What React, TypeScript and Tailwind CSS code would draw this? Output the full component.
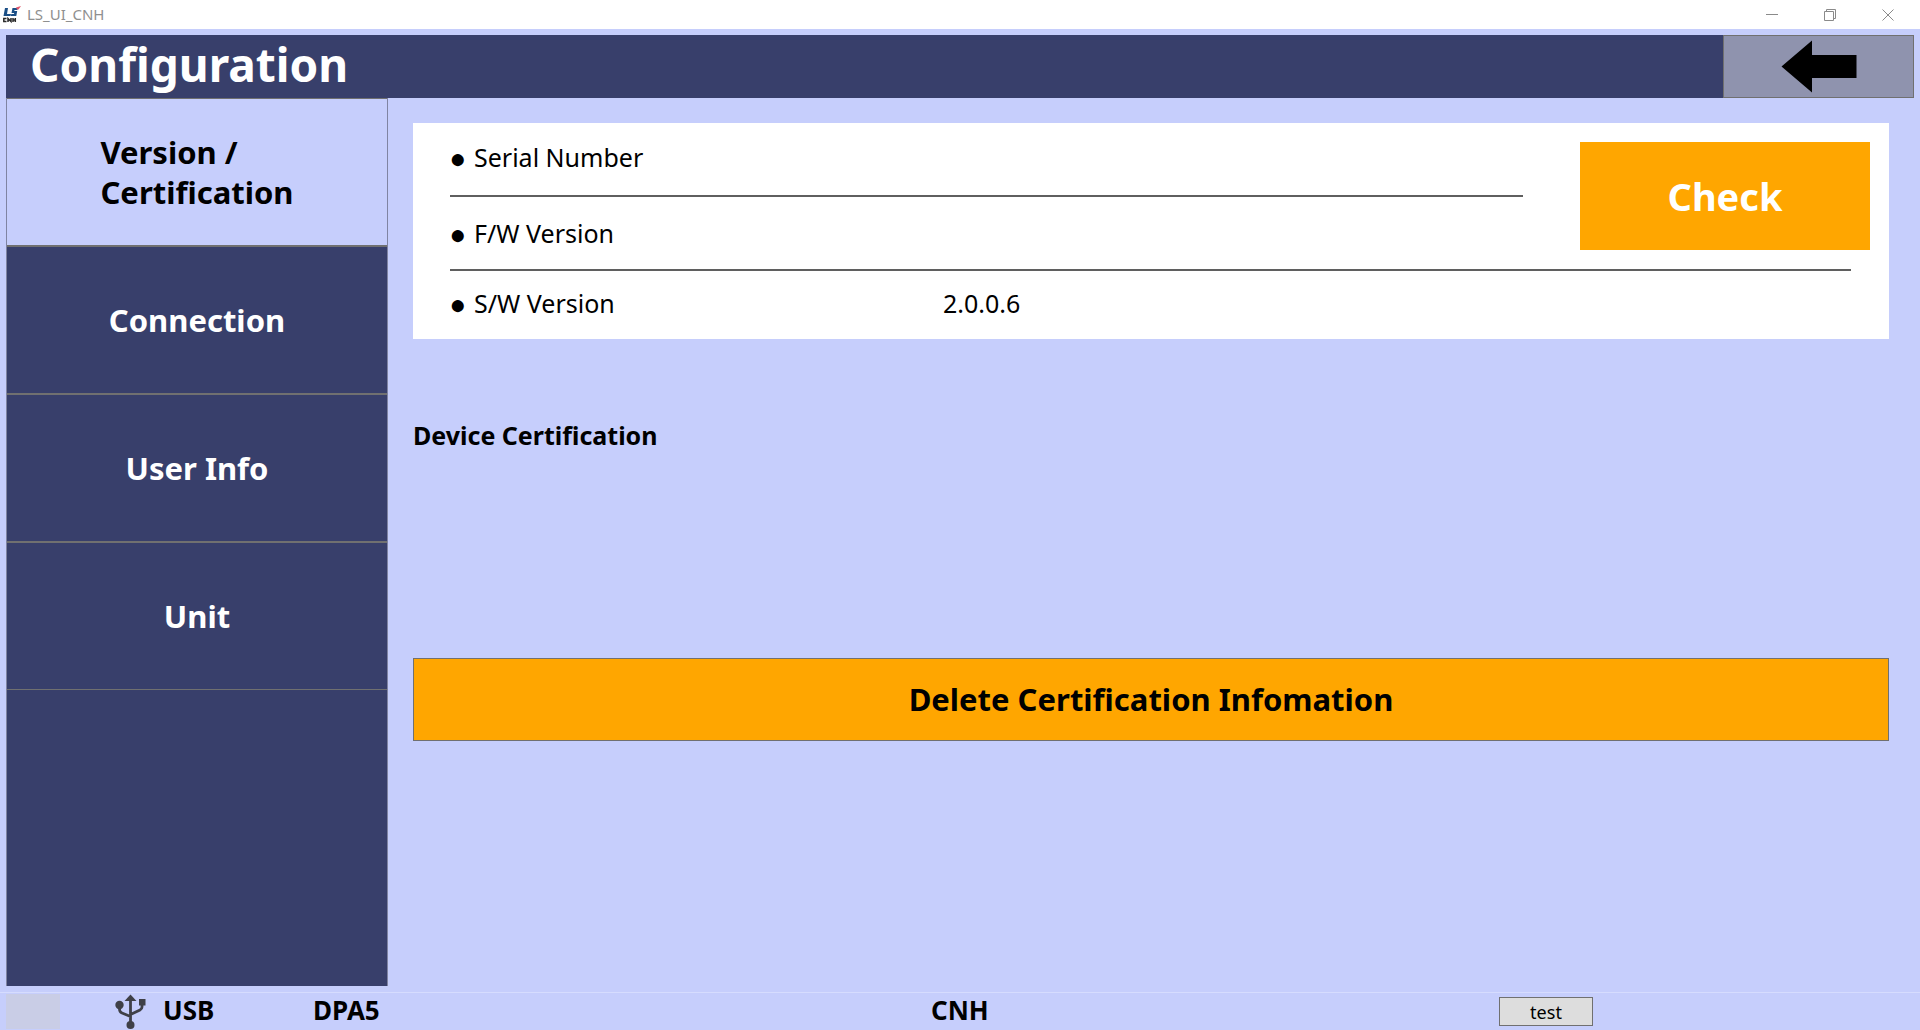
import React from "react";

const NAV = ["Connection", "User Info", "Unit"];

function TitleBar() {
  return (
    <div className="flex h-[29px] shrink-0 items-center justify-between bg-white pl-[2px] pr-[3px]">
      <div className="flex items-center gap-1.5">
        <svg width="19" height="20" viewBox="0 0 19 20" aria-hidden="true">
          <path d="M3 3H6L5 9H9L8.500 11H1.500Z" fill="#1b4f86" />
          <path d="M10.500 3H16L15.300 5H12.500L12.300 6H15.200L14.300 11H8.800L9.300 9H12L12.200 8H9.500Z" fill="#1b4f86" />
          <path d="M14 2.500L19 1L16.500 4.500L15 4.500Z" fill="#e0566b" />
          <path
            d="M4.500 13.500H1.800V16.500H4.500M6 17V13.500L9 16.500V13M11 13V17M13.300 13V17M11 15H13.300"
            fill="none"
            stroke="#2a2a2a"
            strokeWidth="1.500"
          />
        </svg>
        <span className="pb-0.5 text-[15px] leading-5 text-[#8f8f8f]">LS_UI_CNH</span>
      </div>
      <div className="flex h-full text-[#8a8a8a]">
        <button aria-label="Minimize" className="flex w-[58px] items-center justify-center">
          <svg width="12" height="12" fill="none" stroke="currentColor">
            <path d="M0 5.500H12" />
          </svg>
        </button>
        <button aria-label="Restore" className="flex w-[58px] items-center justify-center">
          <svg width="12" height="12" fill="none" stroke="currentColor">
            <path d="M0.500 2.500H9.500V11.500H0.500ZM2.500 2.500V0.500H11.500V9.500H9.500" />
          </svg>
        </button>
        <button aria-label="Close" className="flex w-[58px] items-center justify-center">
          <svg width="12" height="12" fill="none" stroke="currentColor">
            <path d="M0.500 0.500L11.500 11.500M11.500 0.500L0.500 11.500" />
          </svg>
        </button>
      </div>
    </div>
  );
}

function Header() {
  return (
    <header className="flex h-[63px] shrink-0 bg-[#383f6b]">
      <h1 className="flex-1 pl-6 text-[46px] font-bold leading-[58px] text-white">Configuration</h1>
      <button
        aria-label="Back"
        className="flex w-[191px] items-center justify-center border border-[#707070] bg-[#8f93ae]"
      >
        <svg width="76" height="53" viewBox="0 0 76 53" aria-hidden="true">
          <path d="M0.500 26.500L31 0.500V15H75.500V38H31V52.500Z" fill="#000" />
        </svg>
      </button>
    </header>
  );
}

function Sidebar() {
  return (
    <nav className="flex w-[382px] shrink-0 flex-col border-x border-[#8084a2] bg-[#383f6b] text-[31px] font-bold leading-10">
      <button className="flex h-[148px] items-center justify-center border-y border-[#707070] bg-[#c6cefc] text-left text-black">
        <span>
          Version /<br />
          Certification
        </span>
      </button>
      {NAV.map((name) => (
        <button key={name} className="h-[148px] border-y border-[#707070] text-white">
          {name}
        </button>
      ))}
    </nav>
  );
}

function Label({ children }: { children: React.ReactNode }) {
  return (
    <dt className="flex w-[493px] items-center gap-2">
      <span className="flex w-4 justify-center text-[28px] leading-8">●</span>
      {children}
    </dt>
  );
}

function Main() {
  return (
    <main className="flex min-w-0 flex-1 flex-col pb-[245px] pl-[25px] pr-[25px] pt-[25px]">
      <dl className="grid grid-cols-[minmax(0,1fr)_57px_271px_19px_19px] grid-rows-[74px_74px_68px] bg-white pl-[37px] text-[25px] leading-8">
        <div className="flex items-center border-b-2 border-[#5f5f5f] pb-1">
          <Label>Serial Number</Label>
          <dd />
        </div>
        <div className="col-span-2 col-start-3 row-span-2 row-start-1 mb-[21px] mt-[19px] flex">
          <button className="flex-1 bg-[#ffa600] text-[38px] font-bold text-white">Check</button>
        </div>
        <div className="col-span-3 col-start-1 row-start-2 flex items-center border-b-2 border-[#5f5f5f]">
          <Label>F/W Version</Label>
          <dd />
        </div>
        <div className="col-span-3 col-start-1 row-start-3 flex items-center pb-1">
          <Label>S/W Version</Label>
          <dd>2.0.0.6</dd>
        </div>
      </dl>
      <h2 className="mt-20 text-[25px] font-bold leading-8">Device Certification</h2>
      <button className="mt-auto h-[83px] border border-[#707070] bg-[#ffa600] text-[31px] font-bold">
        Delete Certification Infomation
      </button>
    </main>
  );
}

function UsbIcon() {
  return (
    <svg width="32" height="36" viewBox="0 0 32 36" fill="#3f4047" aria-hidden="true">
      <path d="M15.500 0.500L21.500 7H9.500Z" />
      <circle cx="15.500" cy="31" r="4" />
      <circle cx="4.500" cy="11" r="4.200" />
      <rect x="24" y="5" width="6.500" height="6.500" />
      <path
        d="M15.500 6V29M4.500 12V15Q4.500 18 7 19L15.500 22.500M27 10V13Q27 15 25 16L15.500 20.500"
        fill="none"
        stroke="#3f4047"
        strokeWidth="2.800"
      />
    </svg>
  );
}

function StatusBar() {
  return (
    <footer className="grid h-[38px] shrink-0 grid-cols-[115px_198px_618px_minmax(0,1fr)_94px_327px] items-center border-t border-[#d6dcfe] text-[26px] font-bold leading-8">
      <div className="ml-[6px] h-[35px] w-[54px] bg-[#c9cde6]" />
      <div className="flex items-center gap-4">
        <UsbIcon />
        <span className="pb-1">USB</span>
      </div>
      <div className="pb-1">DPA5</div>
      <div className="pb-1">CNH</div>
      <button className="h-[29px] border border-[#707070] bg-[#dddddd] text-lg font-normal leading-6">
        test
      </button>
    </footer>
  );
}

export default function App() {
  return (
    <div className="flex min-h-screen flex-col bg-[#c6cefc] font-['Noto_Sans','Open_Sans',sans-serif] text-black">
      <TitleBar />
      <div className="flex flex-1 flex-col px-[6px] pb-[6px] pt-[6px]">
        <Header />
        <div className="flex flex-1">
          <Sidebar />
          <Main />
        </div>
      </div>
      <StatusBar />
    </div>
  );
}
